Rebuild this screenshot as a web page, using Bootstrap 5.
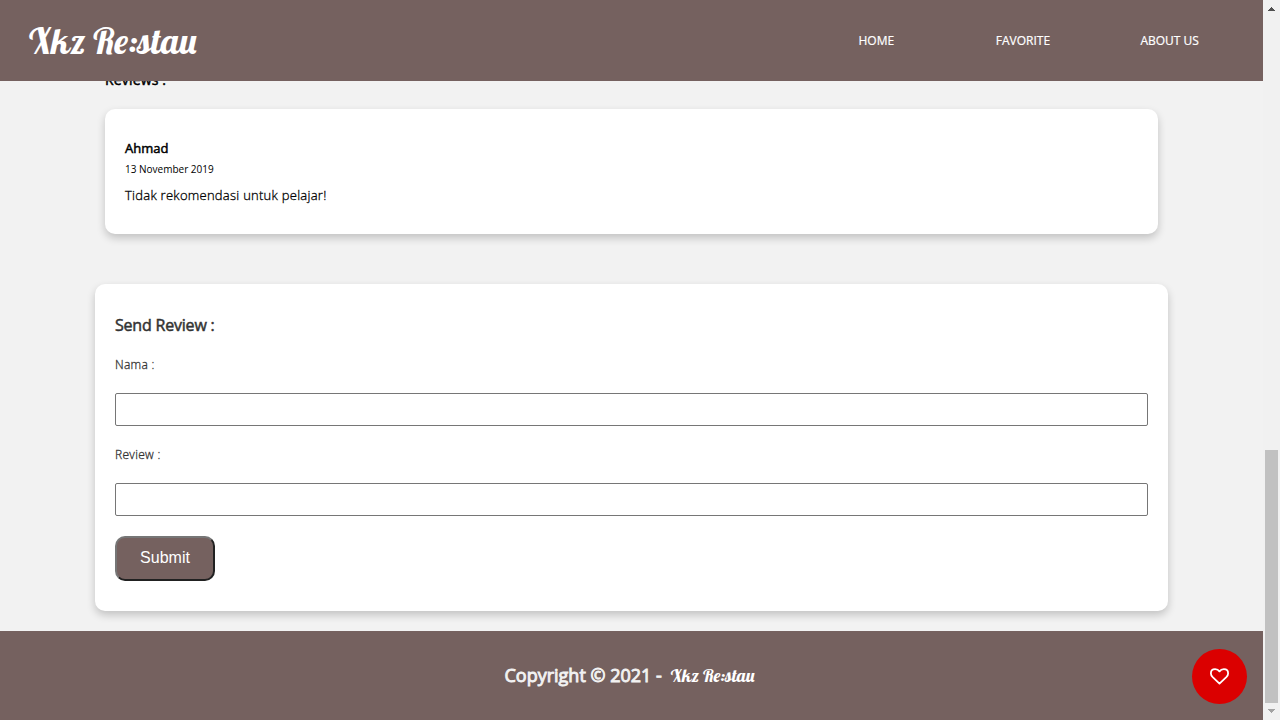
<!DOCTYPE html>
<html lang="id">
<head>
<meta charset="utf-8">
<meta name="viewport" content="width=device-width, initial-scale=1">
<title>Xkz Re:stau</title>
<link rel="stylesheet" href="https://cdn.jsdelivr.net/npm/bootstrap@5.3.0/dist/css/bootstrap.min.css">
<style>
  body { font-family: "Open Sans", sans-serif; color: #000; background: #f2f2f2; font-size: 13px; line-height: 18px; }
  .page { width: 1263px; }
  .brown { background: #75615f; }
  .topbar { height: 81px; z-index: 2; padding: 0 20px 0 29px; }
  .brand-script { font-family: Lobster, "Liberation Serif", serif; font-weight: 400; color: #fff; white-space: nowrap; }
  .topbar .brand-script { font-size: 36px; line-height: 44px; }
  .menu { width: 440px; font-size: 12px; -webkit-text-stroke: .2px currentColor; }
  .menu a { width: 146.67px; color: #fff; text-align: center; }
  .faux { font-weight: 400; -webkit-text-stroke: .5px currentColor; margin: 0; }
  .reviews { padding: 0 105px; margin-top: -11px; }
  .reviews h2 { font-size: 14px; line-height: 20px; letter-spacing: .15px; margin-bottom: 19px; }
  .panel { background: #fff; border-radius: 10px; box-shadow: 0 4px 8px 0 rgba(0,0,0,.2); padding: 20px; }
  .review-item { height: 125px; padding-top: 30px; }
  .review-item h3 { font-size: 13px; line-height: 18px; }
  .date { font-size: 10px; line-height: 14px; margin: 5px 0 10px; }
  .light { font-weight: 300; -webkit-text-stroke: .3px currentColor; }
  .review-text { letter-spacing: .26px; }
  .send { margin: 50px 95px 20px; height: 327px; padding-top: 30px; color: #333; }
  .send h2 { font-size: 16px; line-height: 22px; letter-spacing: -.2px; margin-bottom: 20px; }
  .send label { font-size: 12px; line-height: 17px; letter-spacing: .3px; margin-bottom: 20px; }
  .field { height: 33px; border: 1px solid #767676; border-radius: 2px; background: #fff; margin-bottom: 20px; }
  .send-btn { width: 100px; height: 45px; border: 2px solid; border-radius: 10px; border-color: #767676 #212121 #212121 #767676; color: #fff; font: 16px "Liberation Sans", Arial, sans-serif; }
  .send-btn span { display: block; margin-top: -2px; }
  .foot { color: #f2f2f2; font-size: 18px; line-height: 25px; padding-right: 4px; }
  .foot .faux { -webkit-text-stroke-width: .9px; }
  .foot .brand-script { font-size: 18px; margin-left: 9px; }
  .like { width: 55px; height: 55px; background: #db0000; right: 16px; bottom: 16px; border: 0; }
  .scroller { width: 17px; background: #f1f1f1; }
  .thumb { height: 253px; background: #c1c1c1; margin: auto 2px 0; }
</style>
</head>
<body>
<div class="d-flex vh-100 overflow-hidden">
  <div class="page d-flex flex-column position-relative">
    <nav class="topbar brown d-flex align-items-center justify-content-between flex-shrink-0 position-relative">
      <a href="#" class="brand-script text-decoration-none">Xkz Re:stau</a>
      <div class="menu d-flex">
        <a href="#" class="text-decoration-none">HOME</a>
        <a href="#" class="text-decoration-none">FAVORITE</a>
        <a href="#" class="text-decoration-none">ABOUT US</a>
      </div>
    </nav>
    <section class="reviews">
      <h2 class="faux">Reviews :</h2>
      <article class="panel review-item">
        <h3 class="faux">Ahmad</h3>
        <p class="date">13 November 2019</p>
        <p class="review-text light m-0">Tidak rekomendasi untuk pelajar!</p>
      </article>
    </section>
    <form class="panel send d-flex flex-column flex-shrink-0">
      <h2 class="faux">Send Review :</h2>
      <label for="name" class="light">Nama :</label>
      <input id="name" class="field w-100" type="text">
      <label for="review" class="light">Review :</label>
      <input id="review" class="field w-100" type="text">
      <button type="button" class="send-btn brown p-0"><span>Submit</span></button>
    </form>
    <footer class="foot brown flex-grow-1 d-flex align-items-center justify-content-center">
      <span class="faux">Copyright © 2021 -</span><span class="brand-script">Xkz Re:stau</span>
    </footer>
    <button class="like rounded-circle position-absolute d-flex align-items-center justify-content-center p-0" aria-label="Like">
      <svg width="19" height="17" viewBox="0 0 19 17" fill="none" stroke="#fff" stroke-width="1.8" stroke-linejoin="round"><path d="M9.5 15.6 2.7 9.1C1.6 8 .9 6.9.9 5.4.9 2.9 2.7 1.2 5.1 1.2c1.9 0 3.4.7 4.4 2.2 1-1.5 2.5-2.2 4.4-2.2 2.4 0 4.2 1.7 4.2 4.2 0 1.5-.7 2.6-1.8 3.7Z"/></svg>
    </button>
  </div>
  <div class="scroller d-flex flex-column flex-shrink-0">
    <svg width="17" height="17" shape-rendering="crispEdges"><path fill="#505050" d="M8 7h1v1h1v1h1v1h1v1H5v-1h1V9h1V8h1z"/></svg>
    <div class="thumb"></div>
    <svg class="flex-shrink-0" width="17" height="17" shape-rendering="crispEdges"><path fill="#a3a3a3" d="M5 6h7v1h-1v1h-1v1H9v1H8V9H7V8H6V7H5z"/></svg>
  </div>
</div>
<script src="https://cdn.jsdelivr.net/npm/bootstrap@5.3.0/dist/js/bootstrap.bundle.min.js"></script>
</body>
</html>
